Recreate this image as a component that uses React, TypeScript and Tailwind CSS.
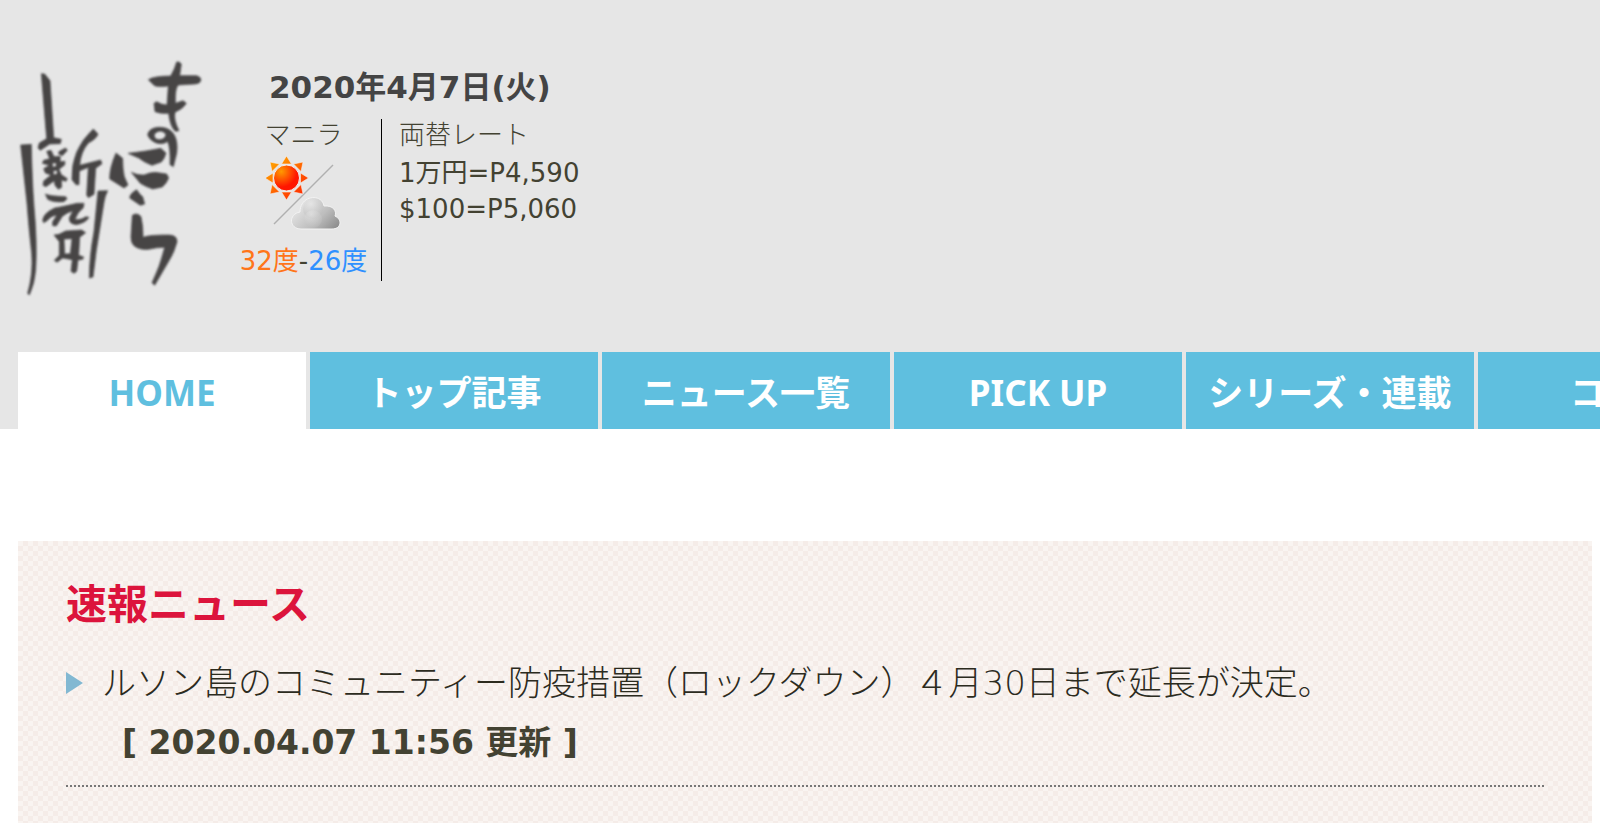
const navItems = [
  { label: 'HOME', href: '#home', active: true },
  { label: 'トップ記事', href: '#top' },
  { label: 'ニュース一覧', href: '#news' },
  { label: 'PICK UP', href: '#pickup' },
  { label: 'シリーズ・連載', href: '#series' },
  { label: 'コラム', href: '#column' },
];

const rates = ['1万円=P4,590', '$100=P5,060'];

function Logo() {
  return (
    <svg width="220" height="270" viewBox="0 0 660 810" role="img" aria-label="まにら新聞">
      <filter id="ink">
        <feGaussianBlur stdDeviation="2.5" />
      </filter>
      <g fill="#464445" stroke="#464445" strokeWidth="2" strokeLinejoin="round" filter="url(#ink)">
        {/* ま */}
        <path d="M445 119 Q462 108 512 108 Q524 88 530 66 Q538 64 544 72 L539 107 L590 107 Q602 110 603 120 Q600 132 585 132 L535 135 Q525 142 526 190 L549 182 L559 190 Q550 206 525 217 Q520 240 537 272 L526 274 Q510 260 506 220 Q480 222 465 215 L462 190 L470 185 Q485 195 501 195 L505 138 Q470 142 462 136 Z" />
        {/* の */}
        <path fillRule="evenodd" d="M443 285 C446 262 477 258 499 265 C525 274 535 303 530 340 L520 380 L510 374 Q512 325 503 304 C490 316 456 314 443 285 Z M463 282 Q460 298 478 299 Q495 299 498 283 Q482 264 463 282 Z" />
        {/* に */}
        <path d="M348 339 L368 355 Q368 390 373 410 L384 435 L372 444 Q350 430 329 417 Q328 385 348 339 Z" />
        <path d="M384 340 Q440 334 482 325 L498 339 Q494 356 484 366 L456 376 Q430 366 418 355 Z" />
        <path d="M394 397 Q414 407 432 405 Q450 397 466 397 L500 402 L506 414 Q500 430 487 441 L458 447 Q436 440 421 430 Z" />
        <path d="M410 449 Q420 465 428 470 L434 492 L421 496 L389 474 Q390 460 410 449 Z" />
        {/* ら */}
        <path d="M397 526 Q412 516 423 530 Q430 560 429 592 Q450 584 508 585 Q532 586 531 606 Q522 640 506 664 L464 736 L456 728 Q480 680 494 622 Q470 622 446 628 Q418 630 403 618 Q392 608 393 590 Z" />
        {/* 新聞 */}
        <path d="M124 101 L134 102 L150 122 L161 293 L184 298 L181 311 L149 312 L121 331 L114 324 L118 309 L140 296 Z" />
        <path d="M62 315 L94 313 Q96 420 102 500 Q112 610 107 690 Q104 730 88 765 L83 760 Q100 700 95 640 Q86 560 81 490 Z" />
        <path d="M294 453 L323 452 Q314 470 312 487 L289 630 L279 711 L268 714 Q268 650 282 575 Z" />
        <path d="M280 267 L294 282 Q290 296 265 309 Q242 336 239 376 L302 360 L306 371 L287 385 L282 463 L265 473 L260 465 L265 382 L238 393 L237 434 L228 434 L216 419 Q212 330 280 267 Z" />
        <path fillRule="evenodd" d="M140 334 L153 331 L162 350 L181 349 L180 365 L195 364 L194 375 L177 388 L184 404 L202 416 L198 424 L184 420 L185 442 L175 448 L165 436 L163 422 L138 440 L129 436 L131 423 L153 405 L136 399 L131 386 L148 376 L127 370 L131 361 L149 356 Z M156 370 L159 382 L169 379 L168 368 Z M160 392 L160 404 L171 403 L172 391 Z" />
        <path d="M197 324 L202 331 L187 347 L175 341 L178 334 Z" />
        <path d="M136 462 Q148 468 197 470 L201 476 L192 485 Q160 488 143 478 Z" />
        <path d="M128 541 Q130 520 164 504 Q190 500 231 490 L252 490 L250 503 Q230 520 225 539 Q245 540 258 530 L267 532 Q256 550 229 554 Q206 552 208 533 L219 512 Q200 518 187 529 L169 558 L158 557 L158 545 L171 525 Q154 526 140 543 L131 548 Z" />
        <path fillRule="evenodd" d="M162 585 L177 583 L197 573 L245 570 L257 578 L239 592 L236 646 L251 651 L248 658 L234 660 L230 694 L222 700 L213 694 L217 659 L188 654 L171 667 L163 661 L178 646 L178 605 Z M192 597 L194 642 L211 641 L216 596 Z" />
      </g>
    </svg>
  );
}

function WeatherIcon() {
  return (
    <svg className="mt-1" width="76" height="76" viewBox="0 0 76 76" role="img" aria-label="晴れのち曇り">
      <defs>
        <linearGradient id="rays" gradientUnits="userSpaceOnUse" x1="8" y1="8" x2="38" y2="40">
          <stop offset="0" stopColor="#ff9a00" />
          <stop offset="1" stopColor="#ff2a00" />
        </linearGradient>
        <radialGradient id="sun" cx="0.3" cy="0.25" r="0.8">
          <stop offset="0" stopColor="#ff9a00" />
          <stop offset="0.75" stopColor="#ff1600" />
        </radialGradient>
        <radialGradient id="puff" cx="0.4" cy="0.25" r="0.8">
          <stop offset="0" stopColor="#ededed" />
          <stop offset="1" stopColor="#b8b8b8" />
        </radialGradient>
        <linearGradient id="cloud" gradientUnits="userSpaceOnUse" x1="34" y1="42" x2="68" y2="76">
          <stop offset="0" stopColor="#ececec" />
          <stop offset="0.6" stopColor="#bdbdbd" />
          <stop offset="1" stopColor="#8c8c8c" />
        </linearGradient>
      </defs>
      <path d="M8 69 L67 10" stroke="#b0b0b0" strokeWidth="1.5" />
      <g fill="url(#rays)" stroke="#f3efec" strokeWidth="0.6">
        <path d="M20.500 1 L25.500 9 H15.500 Z M20.500 45 L25.500 37 H15.500 Z" />
        <path d="M-1 23 L7 18 V28 Z M42.500 23 L34.500 18 V28 Z" />
        <path d="M4 7 L13.500 9 L6 16.500 Z M37 7 L27.500 9 L35 16.500 Z" />
        <path d="M4 39 L13.500 37 L6 29.500 Z M37 39 L27.500 37 L35 29.500 Z" />
      </g>
      <circle cx="20.500" cy="23" r="13" fill="url(#sun)" stroke="#f3efec" />
      <path
        d="M35 74 C23 74 22 59 34 57 C34 40 56 38 58 51 C67 50 71 56 69 61 C77 65 75 74 66 74 Z"
        fill="url(#cloud)"
        stroke="#f3f3f3"
      />
      <circle cx="47" cy="54" r="10" fill="url(#puff)" opacity="0.6" />
      <circle cx="47" cy="64" r="9" fill="url(#puff)" opacity="0.5" />
    </svg>
  );
}

function Header() {
  return (
    <header className="bg-[#e6e6e6] pt-10">
      <div className="flex h-[312px]">
        <a href="#home" className="w-[220px] shrink-0">
          <Logo />
        </a>
        <div className="ml-5 pt-6">
          <p className="pl-[29px] text-[31px] leading-[46px] font-bold text-[#444]">2020年4月7日(火)</p>
          <div className="mt-[9px] flex text-[26px] leading-[36px]">
            <div className="flex h-[162px] w-[142px] shrink-0 flex-col items-center border-r border-black pr-[14px]">
              <span className="leading-[32px] font-light">マニラ</span>
              <WeatherIcon />
              <p className="mt-3 whitespace-nowrap">
                <span className="text-[#ff7519]">32度</span>-<span className="text-[#2e90ff]">26度</span>
              </p>
            </div>
            <div className="pl-[17px]">
              <p className="mb-1 leading-[32px] font-light">両替レート</p>
              {rates.map((rate) => (
                <p key={rate}>{rate}</p>
              ))}
            </div>
          </div>
        </div>
      </div>
      <nav className="overflow-hidden pl-[18px] font-['Noto_Sans','Noto_Sans_CJK_JP',sans-serif]">
        <ul className="flex gap-1">
          {navItems.map((item) => (
            <li key={item.href} className="w-[288px] shrink-0">
              <a
                href={item.href}
                className={
                  item.active
                    ? 'block bg-white pt-[18px] pb-[14px] text-center text-[35px] leading-[45px] font-bold text-[#5fbfdf]'
                    : 'block bg-[#5fbfdf] pt-[18px] pb-[14px] text-center text-[35px] leading-[45px] font-bold text-white'
                }
              >
                {item.label}
              </a>
            </li>
          ))}
        </ul>
      </nav>
    </header>
  );
}

function BreakingNews() {
  return (
    <section className="mt-28 mr-2 ml-[18px] bg-[#f9f4f1] bg-[conic-gradient(#f5ece8_25%,transparent_0_50%,#f5ece8_0_75%,transparent_0)] bg-size-[10px_10px] px-12 pt-9 pb-9">
      <h2 className="text-[41px] leading-[56px] font-bold text-[#dc143c]">速報ニュース</h2>
      <ul className="border-b-2 border-dotted border-[#777] pb-3">
        <li className="flex items-start pt-5">
          <svg className="mt-[18px] shrink-0" width="36" height="24" viewBox="0 0 36 24" aria-hidden="true">
            <path d="M0 1 L17 12 L0 23 Z" fill="#82b8d2" />
          </svg>
          <div className="text-[34px] leading-[60px]">
            <a href="#lockdown" className="font-light text-[#2c2b1e]">
              ルソン島のコミュニティー防疫措置（ロックダウン）４月30日まで延長が決定。
            </a>
            <p className="pl-5 text-[33px] font-bold">[ 2020.04.07 11:56 更新 ]</p>
          </div>
        </li>
      </ul>
    </section>
  );
}

export default function App() {
  return (
    <div lang="ja" className="bg-white font-['DejaVu_Sans','Noto_Sans_CJK_JP',sans-serif] text-[#434232]">
      <Header />
      <main>
        <BreakingNews />
      </main>
    </div>
  );
}
